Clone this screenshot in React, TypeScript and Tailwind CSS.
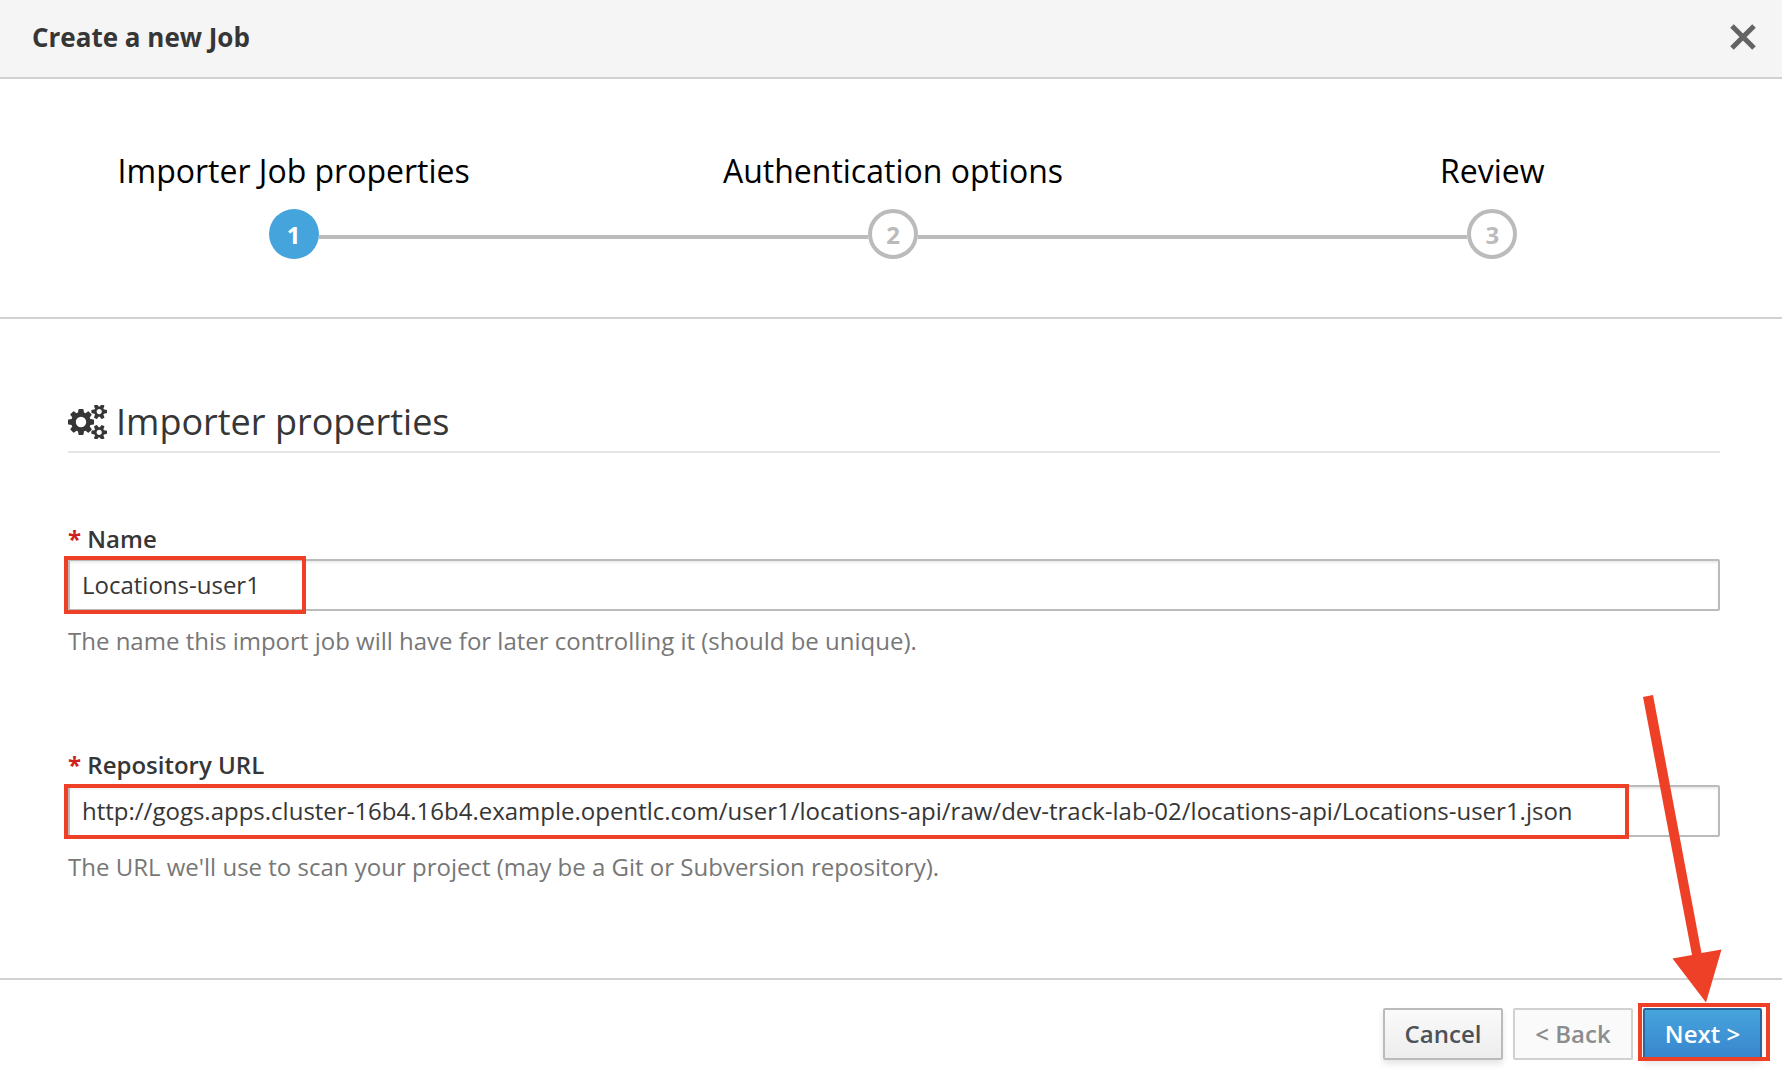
import { useState } from "react";
import type { ReactNode } from "react";

const SMALL_GEAR =
  "v140q0 16-149 31-12 27-30 52 51 113 51 138 0 4-4 7-122 71-124 71-8 0-46-47t-52-68q-20 2-30 2t-30-2q-14 21-52 68t-46 47q-2 0-124-71-4-3-4-7 0-25 51-138-18-25-30-52-149-15-149-31v-140q0-16 149-31 13-29 30-52-51-113-51-138 0-4 4-7 4-2 35-20t59-34 30-16q8 0 46 46.500t52 67.500q20-2 30-2t30 2q51-71 92-112l6-2q4 0 124 70 4 3 4 7 0 25-51 138 17 23 30 52 149 15 149 31z";

function GearsIcon() {
  return (
    <svg viewBox="0 -180 1920 1640" className="h-[34px] w-[39px] shrink-0" fill="currentColor" fillRule="evenodd" aria-hidden="true">
      <path d="M896 640q0-106-75-181t-181-75-181 75-75 181 75 181 181 75 181-75 75-181zM1280 549v185q0 10-7 19.500t-16 10.500l-155 24q-11 35-32 76 34 48 90 115 7 11 7 20 0 12-7 19-23 30-82.500 89.500t-78.500 59.500q-11 0-21-7l-115-90q-37 19-77 31-11 108-23 155-7 24-30 24h-186q-11 0-20-7.500t-10-17.500l-23-153q-34-10-75-31l-118 89q-7 7-20 7-11 0-21-8-144-133-144-160 0-9 7-19 10-14 41-53t47-61q-23-44-35-82l-152-24q-10-1-17-9.500t-7-19.500v-185q0-10 7-19.500t16-10.500l155-24q11-35 32-76-34-48-90-115-7-11-7-20 0-12 7-20 22-30 82-89t79-59q11 0 21 7l115 90q34-18 77-32 11-108 23-154 7-24 30-24h186q11 0 20 7.500t10 17.500l23 153q34 10 75 31l118-89q8-7 20-7 11 0 21 8 144 133 144 160 0 8-7 19-12 16-42 54t-45 60q23 48 34 82l152 23q10 2 17 10.500t7 19.500z" />
      <path d={"M1664 1152q0-52-38-90t-90-38-90 38-38 90q0 53 37.500 90.500t90.500 37.500 90.500-37.500 37.500-90.500zM1920 1082" + SMALL_GEAR} />
      <path d={"M1664 128q0-52-38-90t-90-38-90 38-38 90q0 53 37.500 90.500t90.500 37.500 90.500-37.500 37.500-90.500zM1920 58" + SMALL_GEAR} />
    </svg>
  );
}

const STEPS = ["Importer Job properties", "Authentication options", "Review"];

function Steps({ current }: { current: number }) {
  return (
    <ol className="-mr-2.5 -ml-1.5 grid grid-cols-3">
      {STEPS.map((title, i) => (
        <li key={title} className="flex flex-col items-center text-black">
          <span className="text-[32px] leading-[46px]">{title}</span>
          <div className="mt-[15px] flex w-full items-center">
            <span className={i > 0 ? "mt-1.5 h-1 flex-1 bg-[#bbbbbb]" : "h-1 flex-1"} />
            <span
              className={
                i === current
                  ? "flex size-[50px] items-center justify-center rounded-full bg-[#46a4dc] pt-0.5 text-2xl leading-none font-bold text-white"
                  : "flex size-[50px] items-center justify-center rounded-full border-4 border-[#bbbbbb] bg-white pt-0.5 text-2xl leading-none font-bold text-[#bbbbbb]"
              }
            >
              {i + 1}
            </span>
            <span className={i < STEPS.length - 1 ? "mt-1.5 h-1 flex-1 bg-[#bbbbbb]" : "h-1 flex-1"} />
          </div>
        </li>
      ))}
    </ol>
  );
}

interface FieldProps {
  id: string;
  label: string;
  help: string;
  initial: string;
  marker: ReactNode;
}

function Field({ id, label, help, initial, marker }: FieldProps) {
  const [value, setValue] = useState(initial);
  return (
    <div>
      <label htmlFor={id} className="block text-2xl leading-10 font-semibold">
        <span className="font-bold text-[#d02020]">*</span> {label}
      </label>
      <div className="relative">
        <input
          id={id}
          value={value}
          onChange={(e) => setValue(e.target.value)}
          aria-describedby={id + "-help"}
          className="block h-[52px] w-full rounded-[2px] border-2 border-[#bbbbbb] bg-white px-3 pb-0.5 text-2xl shadow-[inset_0_2px_2px_rgba(3,3,3,0.075)] outline-none"
        />
        {marker}
      </div>
      <p id={id + "-help"} className="mt-2.5 text-2xl leading-10 text-[#777777]">
        {help}
      </p>
    </div>
  );
}

export default function App() {
  return (
    <div
      role="dialog"
      aria-labelledby="dialog-title"
      className="flex min-h-screen flex-col overflow-hidden bg-white font-['Open_Sans',sans-serif] text-[#363636]"
    >
      <header className="flex items-center justify-between border-b-2 border-[#d1d1d1] bg-[#f5f5f5] pt-[17px] pr-6 pb-5 pl-8">
        <h1 id="dialog-title" className="text-[26px] leading-10 font-bold">
          Create a new Job
        </h1>
        <button type="button" aria-label="Close" className="flex size-[30px] items-center justify-center text-[#636363]">
          <svg viewBox="0 0 26 26" className="size-[26px]" fill="none" stroke="currentColor" strokeWidth="5" aria-hidden="true">
            <path d="M2 2L24 24M24 2L2 24" />
          </svg>
        </button>
      </header>

      <nav aria-label="Progress" className="border-b-2 border-[#d1d1d1] pt-[69px] pb-[58px]">
        <Steps current={0} />
      </nav>

      <main className="flex-1 pt-20 pr-[62px] pl-[68px]">
        <h2 className="flex items-center gap-[9px] border-b-2 border-[#e5e5e5] pb-1.5 text-4xl leading-[46px]">
          <GearsIcon />
          Importer properties
        </h2>
        <form className="mt-[66px] flex flex-col gap-[84px]">
          <Field
            id="job-name"
            label="Name"
            initial="Locations-user1"
            help="The name this import job will have for later controlling it (should be unique)."
            marker={<span className="pointer-events-none absolute -inset-y-[3px] -left-1 w-[242px] border-4 border-[#ee4026]" />}
          />
          <Field
            id="repository-url"
            label="Repository URL"
            initial="http://gogs.apps.cluster-16b4.16b4.example.opentlc.com/user1/locations-api/raw/dev-track-lab-02/locations-api/Locations-user1.json"
            help="The URL we'll use to scan your project (may be a Git or Subversion repository)."
            marker={<span className="pointer-events-none absolute -top-px right-[91px] -bottom-0.5 -left-1 border-4 border-[#ee4026]" />}
          />
        </form>
      </main>

      <footer className="flex justify-end gap-2.5 border-t-2 border-[#d1d1d1] pt-7 pr-5 pb-7">
        <button
          type="button"
          className="h-[52px] w-[120px] rounded-[2px] border-2 border-[#bbbbbb] bg-linear-to-b from-[#fafafa] to-[#ededed] text-2xl font-semibold text-[#4d5258] shadow-[0_4px_6px_rgba(3,3,3,0.1)]"
        >
          Cancel
        </button>
        <button
          type="button"
          disabled
          className="h-[52px] w-[120px] rounded-[2px] border-2 border-[#d1d1d1] bg-[#fafafa] text-2xl font-semibold text-[#8b8d8f]"
        >
          &lt; Back
        </button>
        <div className="relative">
          <button
            type="button"
            className="h-[52px] w-[119px] rounded-[2px] border-2 border-[#2b669a] bg-linear-to-b from-[#46a4dc] to-[#3985cd] text-2xl font-semibold text-white shadow-[0_4px_6px_rgba(3,3,3,0.1)]"
          >
            Next &gt;
          </button>
          <span className="pointer-events-none absolute -top-[5px] -right-2 -bottom-px -left-[5px] border-4 border-[#ee4026]" />
          <svg
            viewBox="0 0 80 308"
            className="pointer-events-none absolute bottom-full left-0 mb-[5px] h-[308px] w-20"
            fill="#ee4026"
            aria-hidden="true"
          >
            <path d="M0 2L10 0L58.500 258L78.500 254.500L63 307.500L29.500 263.500L49 260Z" />
          </svg>
        </div>
      </footer>
    </div>
  );
}
